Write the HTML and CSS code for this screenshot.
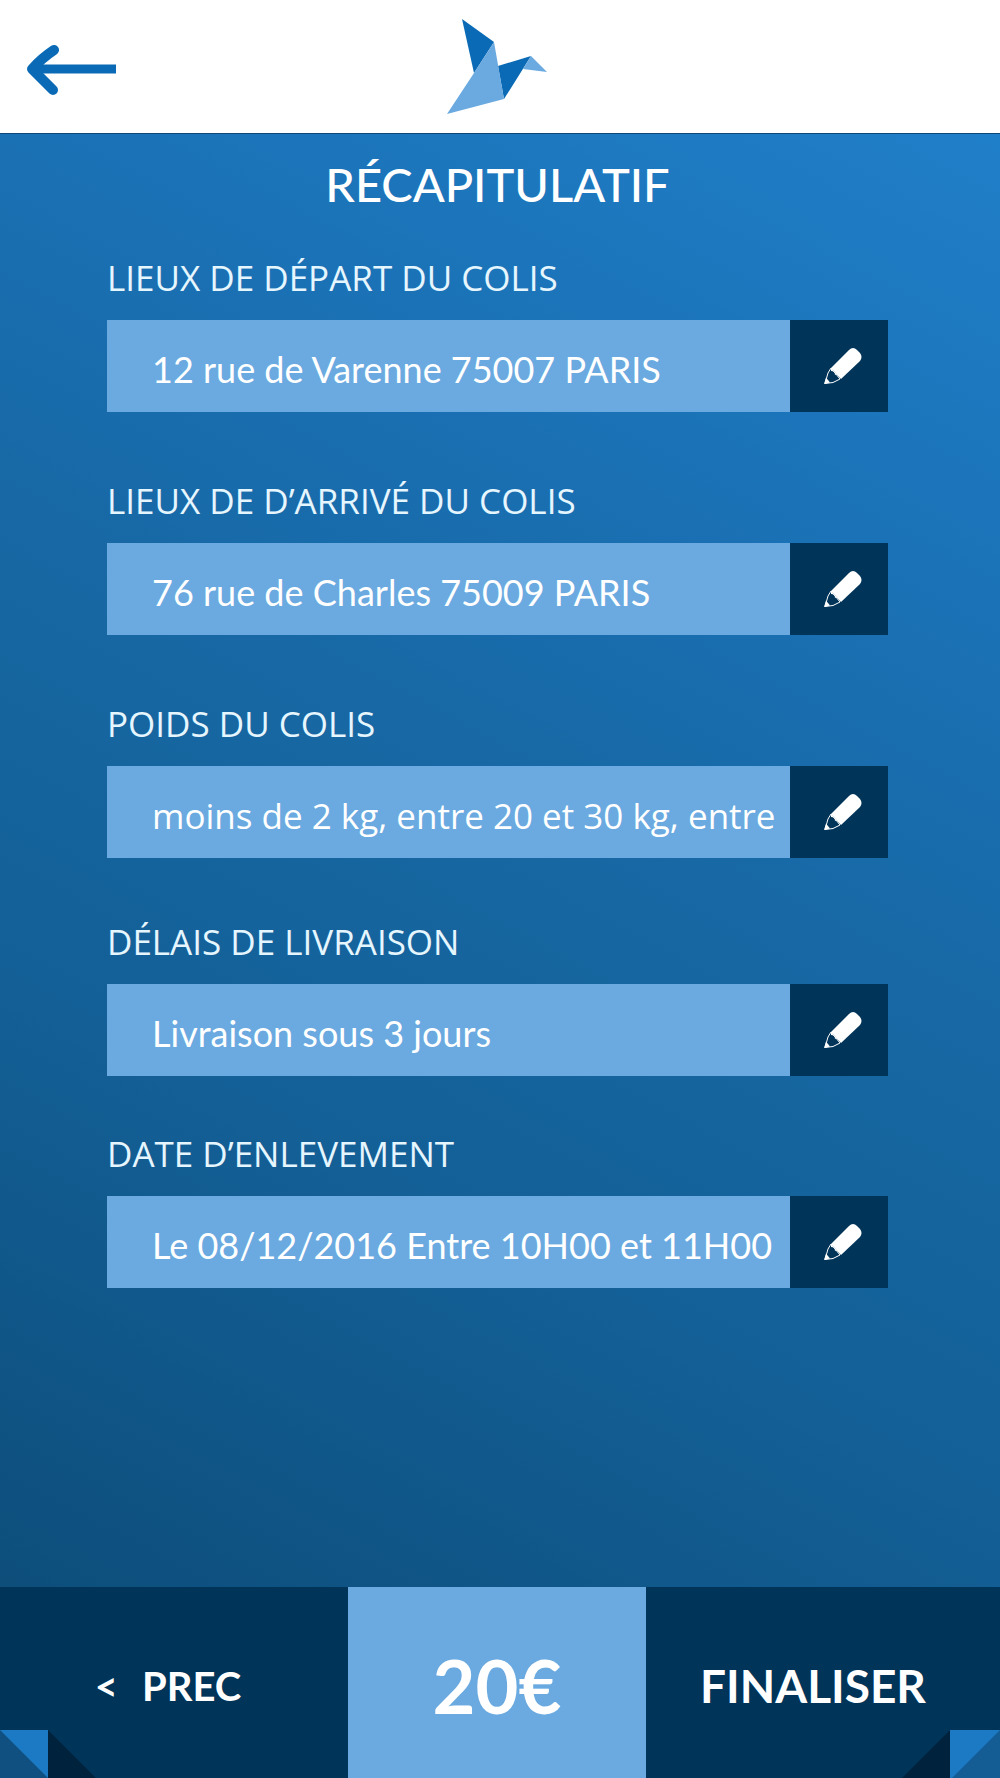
FILE: index.html
```html
<!DOCTYPE html>
<html lang="fr">
<head>
    <meta charset="UTF-8">
    <meta name="viewport" content="width=device-width, initial-scale=1.0">
    <title>Récapitulatif</title>
    <link rel="stylesheet" href="styles.css">
</head>
<body>

<!-- pencil shared by all the edit buttons -->
<svg class="sprite" aria-hidden="true">
    <symbol id="pencil" viewBox="0 0 38 38">
        <path fill="#fff" d="M7 21 L25 3 Q29 -1 33 3 L36 6 Q39 10 36 14 L17 32 Z"/>
        <path fill="#003459" stroke="#fff" stroke-width="1" d="M7 21 L16 32 L9 35.500 L1 36.500 L4 26 Z"/>
        <path fill="#fff" d="M7 21 L17 32 L15 30 Q14 26 11 28 Q11 24 7 24 Z"/>
        <path fill="#fff" d="M2 30.500 L6 35.500 L0 37 Z"/>
    </symbol>
</svg>

<header class="header">
    <a class="back" href="#" aria-label="Retour">
        <svg width="90" height="52" viewBox="0 0 90 52">
            <path d="M7 25 H89" stroke="#0a6ab5" stroke-width="9" fill="none"/>
            <path d="M27 6 Q15 14 5 25 L26 46" stroke="#0a6ab5" stroke-width="10" stroke-linecap="round" stroke-linejoin="round" fill="none"/>
        </svg>
    </a>
    <svg class="logo" width="102" height="96" viewBox="0 0 102 96">
        <polygon fill="#0a6ab5" points="15,0 47,23 27,54"/>
        <polygon fill="#0a6ab5" points="51,47 84,37 57,80"/>
        <polygon fill="#6aaae0" points="47,23 57,80 0,95 27,54"/>
        <polygon fill="#6aaae0" points="84,37 100,53 76,50"/>
    </svg>
</header>

<main class="content">
    <h1>RÉCAPITULATIF</h1>

    <form class="recap">
        <div class="group">
            <div class="field">
                <label for="depart">LIEUX DE DÉPART DU COLIS</label>
                <div class="row">
                    <input type="text" id="depart" value="12 rue de Varenne 75007 PARIS">
                    <button type="button" class="edit" aria-label="Modifier le départ"><svg><use href="#pencil"/></svg></button>
                </div>
            </div>
            <div class="field">
                <label for="arrivee">LIEUX DE D’ARRIVÉ DU COLIS</label>
                <div class="row">
                    <input type="text" id="arrivee" value="76 rue de Charles 75009 PARIS">
                    <button type="button" class="edit" aria-label="Modifier l’arrivée"><svg><use href="#pencil"/></svg></button>
                </div>
            </div>
            <div class="field">
                <label for="poids">POIDS DU COLIS</label>
                <div class="row">
                    <input type="text" id="poids" class="humanist" value="moins de 2 kg, entre 20 et 30 kg, entre">
                    <button type="button" class="edit" aria-label="Modifier le poids"><svg><use href="#pencil"/></svg></button>
                </div>
            </div>
        </div>

        <div class="group group-delivery">
            <div class="field">
                <label for="delais">DÉLAIS DE LIVRAISON</label>
                <div class="row">
                    <input type="text" id="delais" value="Livraison sous 3 jours">
                    <button type="button" class="edit" aria-label="Modifier le délai"><svg><use href="#pencil"/></svg></button>
                </div>
            </div>
            <div class="field">
                <label for="date">DATE D’ENLEVEMENT</label>
                <div class="row">
                    <input type="text" id="date" value="Le 08/12/2016 Entre 10H00 et 11H00">
                    <button type="button" class="edit" aria-label="Modifier la date"><svg><use href="#pencil"/></svg></button>
                </div>
            </div>
        </div>
    </form>
</main>

<footer class="footer">
    <button type="button" class="prev"><span class="chevron">&lt;</span>PREC</button>
    <div class="price">20€</div>
    <button type="button" class="next">FINALISER</button>
    <svg class="corner corner-left" width="96" height="48" viewBox="0 0 96 48">
        <polygon fill="#00223c" points="48,0 96,48 48,48"/>
        <rect fill="#0f5081" width="48" height="48"/>
        <polygon fill="#1c7ac4" points="0,0 48,0 48,48"/>
    </svg>
    <svg class="corner corner-right" width="98" height="48" viewBox="0 0 98 48">
        <polygon fill="#00223c" points="48,0 0,48 48,48"/>
        <rect fill="#135d94" x="48" width="50" height="48"/>
        <polygon fill="#1c7ac4" points="48,0 98,0 50,48 48,48"/>
    </svg>
</footer>

</body>
</html>
```

FILE: styles.css
```css
* {
    box-sizing: border-box;
}
body {
    margin: 0;
    min-height: 100vh;
    display: flex;
    flex-direction: column;
    font-family: Lato, sans-serif;
    color: #fff;
    background: #146099;
}
button, input {
    font-family: inherit;
    color: inherit;
    border: none;
    border-radius: 0;
}
button {
    cursor: pointer;
}
.sprite {
    display: none;
}
.header {
    height: 134px;
    display: grid;
    grid-template-columns: 1fr auto 1fr;
    align-items: center;
    padding: 0 32px 0 27px;
    background: #fff;
    border-bottom: 1px solid #0d4878;
}
.back svg, .logo {
    display: block;
}
.back {
    padding-top: 6px;
}
.content {
    flex: 1;
    padding: 22px 11.200% 0 10.700%;
    background: linear-gradient(208deg, #207fc9 0%, #1a70b3 28%, #1768a4 46%, #135f96 70%, #0d4e7b 100%);
}
h1 {
    margin: 0 0 36px;
    font-size: 47px;
    line-height: 56px;
    font-weight: 500;
    text-align: center;
}
.group {
    display: flex;
    flex-direction: column;
    gap: 59px;
}
.group-delivery {
    margin-top: 54px;
    gap: 48px;
}
.field label {
    display: block;
    height: 72px;
    padding-top: 8px;
    font-family: "Open Sans", sans-serif;
    font-size: 35px;
    line-height: 44px;
    color: #e6f6ff;
}
.row {
    display: flex;
    height: 92px;
}
.row input {
    flex: 1;
    min-width: 0;
    padding: 6px 0 0 45px;
    font-size: 36px;
    background: #6aaae0;
    outline: none;
}
.row .humanist {
    font-family: "Open Sans", sans-serif;
    font-size: 35px;
}
.edit {
    width: 98px;
    display: flex;
    align-items: center;
    justify-content: center;
    padding: 0 0 0 8px;
    background: #003459;
}
.edit svg {
    width: 38px;
    height: 38px;
}
.footer {
    position: relative;
    height: 191px;
    display: grid;
    grid-template-columns: 348fr 298fr 354fr;
    background: #003459;
}
.prev, .next {
    padding: 6px 20px 0 0;
    background: none;
    font-weight: bold;
}
.prev {
    padding-right: 12px;
    font-size: 40px;
}
.chevron {
    margin-right: 24px;
}
.next {
    font-size: 46px;
}
.price {
    display: flex;
    align-items: center;
    justify-content: center;
    padding-top: 6px;
    font-size: 74px;
    font-weight: bold;
    background: #6aaae0;
}
/* folded paper corners over the bar */
.corner {
    position: absolute;
    bottom: 0;
}
.corner-left {
    left: 0;
}
.corner-right {
    right: 0;
}
```
